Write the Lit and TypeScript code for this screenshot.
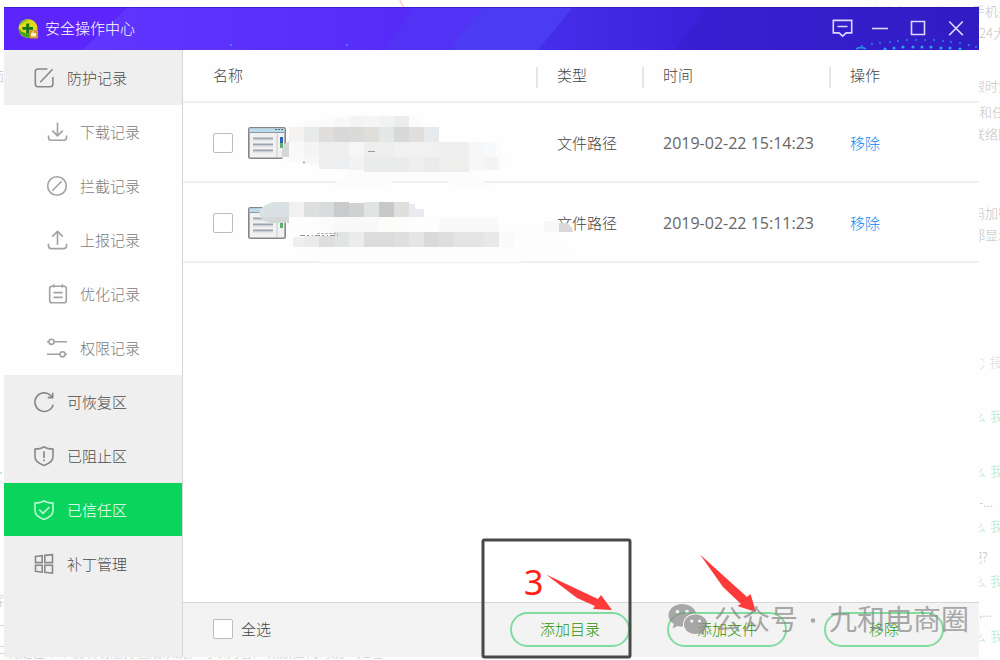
import { LitElement, html, svg, css, nothing } from "lit";
import { customElement, property, state } from "lit/decorators.js";
import { classMap } from "lit/directives/class-map.js";

interface NavItem {
  id: string;
  label: string;
  icon: string;
  sub?: boolean;
}

interface TrustedFile {
  id: string;
  type: string;
  time: string;
}

const NAV: NavItem[] = [
  { id: "protect", label: "防护记录", icon: "edit" },
  { id: "download", label: "下载记录", icon: "download", sub: true },
  { id: "block", label: "拦截记录", icon: "block", sub: true },
  { id: "report", label: "上报记录", icon: "upload", sub: true },
  { id: "optimize", label: "优化记录", icon: "note", sub: true },
  { id: "permission", label: "权限记录", icon: "sliders", sub: true },
  { id: "restore", label: "可恢复区", icon: "restore" },
  { id: "blocked", label: "已阻止区", icon: "shieldWarn" },
  { id: "trusted", label: "已信任区", icon: "shieldOk" },
  { id: "patch", label: "补丁管理", icon: "windows" },
];

const FILES: TrustedFile[] = [
  { id: "f1", type: "文件路径", time: "2019-02-22 15:14:23" },
  { id: "f2", type: "文件路径", time: "2019-02-22 15:11:23" },
];

const SHIELD = "M10 .8C12.6 2.6 15.6 3 19 3V10.5C19 15.3 15 17.8 10 19.4 5 17.8 1 15.3 1 10.5V3C4.4 3 7.4 2.6 10 .8Z";

const ICONS: Record<string, unknown> = {
  edit: svg`<path d="M13.5 1H4Q1.3 1 1.3 3.7V16Q1.3 18.7 4 18.7H16Q18.9 18.7 18.9 16V9M6.2 14.2 18.6 1.2"/>`,
  download: svg`<path d="M10.5 .5V13.5M5.3 8.6 10.5 13.8 15.8 8.6M1.5 13.5V15.5Q1.5 18.3 4.3 18.3H16.7Q19.5 18.3 19.5 15.5V13.5"/>`,
  block: svg`<circle cx="10" cy="10" r="9.3"/><path d="M5.3 14.7 14.7 5.3"/>`,
  upload: svg`<path d="M10.5 15V1.6M5.3 6.6 10.5 1.4 15.8 6.6M1.5 13.8V15.8Q1.5 18.6 4.3 18.6H16.7Q19.5 18.6 19.5 15.8V13.8"/>`,
  note: svg`<path d="M5 2.3H17Q19.3 2.3 19.3 4.6V16.4Q19.3 18.8 17 18.8H5Q2.7 18.8 2.7 16.4V4.6Q2.7 2.3 5 2.3ZM6.7 .2V3.6M15.3 .2V3.6M6.5 8.6H15.5M6.5 13.4H15.5"/>`,
  sliders: svg`<circle cx="4.5" cy="3.8" r="2.6"/><path d="M0 3.8H1.9M7.1 3.8H20M0 16.3H12.9M18.1 16.3H20"/><circle cx="15.5" cy="16.3" r="2.6"/>`,
  restore: svg`<path d="M19.2 12.6A9.3 9.3 0 1 1 16.8 3.6L18.6 5.4M18.7 .8V5.6H13.8"/>`,
  shieldWarn: svg`<path d=${SHIELD} /><path d="M10 5.3V12M10 13.4V15.2"/>`,
  shieldOk: svg`<path d=${SHIELD} /><path d="M5.2 9.6 9 13.4 15.4 7"/>`,
  windows: svg`<path d="M1.5 2.5 8.2 1.7V8.6H1.5ZM10.8 1.4 18.5 .6V8.6H10.8ZM1.5 11.3H8.2V18.2L1.5 17.4ZM10.8 11.3H18.5V19.2L10.8 18.4Z"/>`,
  feedback: svg`<path d="M1.3 1.4H19.7V13.9H14.2L10.6 17.2 7 13.9H1.3ZM5.5 7.5H15.5"/>`,
  minimize: svg`<path d="M2 9.500H18"/>`,
  maximize: svg`<path d="M3.500 2.500H16.500V15.500H3.500Z"/>`,
  close: svg`<path d="M3.200 2.500 16.800 16.100M16.800 2.500 3.200 16.100"/>`,
};

@customElement("line-icon")
class LineIcon extends LitElement {
  @property() name = "";

  static styles = css`
    :host { display: block; width: 20px; height: 20px; flex: none; }
    .icon { display: block; width: 20px; height: 20px; overflow: visible; fill: none; stroke: currentColor; stroke-width: 1.6; }
  `;

  render() {
    return html`<svg class="icon" viewBox="0 0 20 20" aria-hidden="true">${ICONS[this.name] ?? nothing}</svg>`;
  }
}

/* Blocks of the pixelated cover over the file names: x, y, width, height, colour. */
const BLOCKS: [number, number, number, number, string][] = [
  [334, 118, 15, 9, "#f8f8f8"], [349, 116, 15, 11, "#f3f4f4"], [364, 116, 15, 11, "#f5f5f4"], [379, 116, 15, 11, "#f1f3f3"], [394, 116, 15, 11, "#eceded"], [409, 118, 12, 9, "#fbfbfb"],
  [304, 121, 30, 6, "#fafafa"],
  [289, 127, 15, 15, "#f4f3f1"], [304, 127, 15, 15, "#e7eae8"], [319, 127, 15, 15, "#e0dedc"], [334, 127, 15, 15, "#d8d8d8"], [349, 127, 15, 15, "#dadad9"], [364, 127, 15, 15, "#e0dedb"], [379, 127, 15, 15, "#e5e8e9"], [394, 127, 15, 15, "#d8d8d8"], [409, 127, 15, 15, "#e1dfdb"], [424, 127, 15, 15, "#e6eaed"],
  [289, 142, 15, 15, "#f9f9f9"], [304, 142, 15, 15, "#f4f4f4"], [319, 142, 30, 15, "#eeeeee"], [349, 142, 15, 15, "#f5f6f7"], [364, 142, 30, 15, "#eeeeee"], [394, 142, 45, 15, "#f1f1f1"], [439, 142, 30, 15, "#efefef"], [469, 142, 15, 15, "#f5f6f7"], [484, 142, 12, 15, "#f7f9fb"],
  [289, 157, 15, 5, "#fafafa"], [304, 157, 15, 7, "#f7f7f7"], [319, 157, 15, 12, "#eeeeee"], [334, 157, 15, 12, "#eceff2"], [349, 157, 15, 13, "#f2f2f0"], [364, 157, 45, 15, "#eaebeb"], [409, 157, 15, 15, "#efefef"], [424, 157, 15, 15, "#ebebeb"], [439, 157, 30, 15, "#eeeeed"], [469, 157, 15, 13, "#f7f7f7"], [484, 157, 15, 13, "#f4f4f4"],
  [289, 202, 15, 15, "#f2f1ef"], [304, 202, 15, 15, "#dcdfde"], [319, 202, 15, 15, "#d9dcdc"], [334, 202, 15, 15, "#c9cacb"], [349, 203, 15, 14, "#d0d1d2"], [364, 202, 15, 15, "#e0e4e3"], [379, 202, 15, 15, "#c8c8c8"], [394, 202, 15, 15, "#e0dfde"], [409, 204, 6, 13, "#e8eaef"], [415, 209, 9, 8, "#e9ebf0"],
  [319, 217, 15, 15, "#fbfbfb"], [334, 217, 45, 15, "#f9f9f9"], [379, 217, 30, 15, "#fcfcfb"], [439, 218, 60, 14, "#f9f9f9"], [544, 221, 15, 11, "#f7f7f7"],
  [293, 237, 11, 10, "#efefef"], [304, 236, 15, 11, "#ebebec"], [319, 236, 15, 11, "#dedede"], [334, 232, 15, 15, "#e2e4e4"], [349, 232, 15, 15, "#ebedec"], [364, 232, 30, 15, "#dcdcdc"], [394, 232, 15, 15, "#dfdfdf"], [409, 232, 15, 15, "#e5e5e5"], [424, 232, 15, 15, "#dcdad9"], [439, 232, 15, 15, "#dedede"], [454, 232, 30, 15, "#e4e4e4"], [484, 232, 15, 15, "#e8e8e8"], [499, 232, 15, 15, "#fafafa"],
];

const UPPER_DOTS = [[862, 46], [872, 44], [880, 43], [890, 42], [898, 41], [907, 40], [916, 40], [925, 40], [934, 40], [943, 41], [951, 42], [960, 43], [969, 45], [976, 47]];
const LOWER_DOTS = [[885, 49], [894, 48], [903, 47], [913, 47], [922, 47], [931, 47], [941, 48], [950, 48], [960, 49]];

/* Clipped lines of the web page behind the window: x, baseline, text, class. */
const BACKDROP: [number, number, string, string][] = [
  [972, 16, "手机关", "gray"],
  [979, 38, "24大", "gray"],
  [972, 91, "限时免", "gray"],
  [979, 117, "和任务", "gray"],
  [972, 139, "联络网", "gray"],
  [972, 218, "码加密", "gray"],
  [972, 240, "都显示", "gray"],
  [990, 367, "接口", "pale"],
  [973, 421, "么", "green"], [990, 421, "我的", "green"],
  [973, 476, "么", "green"], [990, 476, "我的", "green"],
  [979, 507, "-...", "gray"],
  [973, 531, "么", "green"], [990, 531, "我的", "green"],
  [969, 562, "吧?", "gray"],
  [973, 586, "么", "green"], [990, 586, "我的", "green"],
  [979, 617, ",...", "gray"],
  [973, 641, "么", "green"], [990, 641, "我的", "green"],
];

@customElement("app-root")
class AppRoot extends LitElement {
  @state() private active = "trusted";
  @state() private selected: string[] = [];

  static styles = css`
    :host {
      display: flex;
      box-sizing: border-box;
      min-height: 100vh;
      padding: 7px 21px 3px 4px;
      position: relative;
      overflow: hidden;
      background: #fefefe;
      color: #444;
      font: 300 15px/20px "Noto Sans CJK SC", "Noto Sans", sans-serif;
    }
    .backdrop { position: absolute; right: 0; top: 0; width: 1000px; height: 660px; }
    .backdrop text { font-size: 13px; }
    .gray { fill: #c4c4c4; }
    .pale { fill: #dcdcdc; }
    .green { fill: #b4e6c5; }
    .window { position: relative; flex: 1; display: flex; flex-direction: column; background: #fefefe; min-width: 0; }
    .titlebar { position: relative; display: flex; align-items: center; height: 43px; padding: 0 13px 0 14px; background: #4a2bea; color: #fff; box-sizing: border-box; }
    .art { position: absolute; inset: 0; width: 100%; height: 100%; }
    .logo { position: relative; width: 20px; height: 20px; margin-right: 7px; }
    .title { position: relative; flex: 1; margin: 0; padding-bottom: 2px; font-size: 15px; font-weight: 300; }
    .controls { position: relative; display: flex; gap: 18px; }
    .control { border: 0; padding: 0; background: none; color: #dcd8fb; cursor: pointer; }
    .body { flex: 1; display: flex; min-height: 0; }
    .sidebar { width: 178px; flex: none; padding-top: 1px; background: #efefef; border-right: 1px solid #d6d6d6; }
    .nav { display: flex; align-items: center; gap: 13px; box-sizing: border-box; width: 100%; height: 54px; padding: 0 0 0 30px; border: 0; background: #efefef; color: #4c4c4c; font: inherit; text-align: left; cursor: pointer; }
    .nav line-icon { color: #888; }
    .sub { padding-left: 43px; background: #fefefe; color: #7c7c7c; }
    .sub line-icon { color: #a2a2a2; }
    .active { background: #0bd45d; color: #fff; border-bottom: 1px solid #efefef; }
    .active line-icon { color: #c0f5d5; }
    .main { flex: 1; display: flex; flex-direction: column; min-width: 0; }
    .list { flex: 1; position: relative; }
    .table { width: 100%; table-layout: fixed; border-collapse: separate; border-spacing: 0; }
    .table th { box-sizing: border-box; height: 53px; padding: 0 0 2px 21px; font-weight: 300; text-align: left; border-bottom: 2px solid #efefef; background: linear-gradient(#e6e6e6, #e6e6e6) left 0 top 17px / 2px 21px no-repeat; }
    .table td { box-sizing: border-box; height: 80px; padding: 2px 0 0 21px; border-bottom: 2px solid #efefef; }
    .table th.c-name, .table td.c-name { padding-left: 30px; background: none; }
    .table .c-type { width: 106px; }
    .table .c-time { width: 187px; }
    .table .c-action { width: 150px; }
    .time { color: #666; font: 400 16px/20px "Open Sans", "Noto Sans", sans-serif; }
    .file { display: flex; align-items: center; gap: 15px; }
    .file-icon { display: block; width: 38px; height: 33px; }
    .box { appearance: none; flex: none; box-sizing: border-box; width: 20px; height: 20px; margin: 0; border: 1px solid #bcbcbc; border-radius: 2px; background: #fff; }
    .box:checked { background: #0bd45d; }
    .link { color: #0a85f5; text-decoration: none; }
    .cover { position: absolute; left: 70px; top: 60px; width: 330px; height: 160px; pointer-events: none; }
    .footer { display: flex; align-items: center; gap: 37px; box-sizing: border-box; height: 55px; padding: 0 35px 2px 30px; border-top: 1px solid #d6d6d6; background: #f3f3f3; }
    .all { flex: 1; display: flex; align-items: center; gap: 8px; }
    .pill { width: 120px; height: 35px; padding: 0; border: 2px solid #82dc9d; border-radius: 18px; background: transparent; color: #1e9600; font: inherit; cursor: pointer; }
    .marks { position: absolute; right: 0; bottom: 0; width: 520px; height: 123px; pointer-events: none; }
    .step { font: 400 34px "Noto Sans", sans-serif; fill: #ff2012; }
    .stamp { font: 400 28px "Noto Sans CJK SC", sans-serif; fill: #8a8a8a; }
  `;

  private toggle(id: string) {
    this.selected = this.selected.includes(id) ? this.selected.filter((x) => x !== id) : [...this.selected, id];
  }

  private toggleAll(e: Event) {
    this.selected = (e.target as HTMLInputElement).checked ? FILES.map((f) => f.id) : [];
  }

  private renderBackdrop() {
    return html`<svg class="backdrop" viewBox="0 0 1000 660" aria-hidden="true">
      ${BACKDROP.map(([x, y, t, c]) => svg`<text x=${x} y=${y} class=${c}>${t}</text>`)}
      <text x="855" y="17" class="gray">从软件官网下载安</text>
      <text x="6" y="657" class="gray">确定让个个模块功能打包成系统，可以对客户做数据代码统一处理</text>
      <text x="-9" y="81" class="gray">面</text>
      <text x="-9" y="605" class="gray">客</text>
      <path d="M400 0Q401 4 404 8" stroke="#ffd5d5" stroke-width="2" fill="none" />
      <path d="M0 625.500H4M0 646.500H4M0 653.500H4" stroke="#d6d6d6" />
      <path d="M980 359Q984 358 984 362M980 369Q984 368 984 365" stroke="#e2e2e2" fill="none" />
      <path d="M0 473H2" stroke="#bdebd0" stroke-width="2" />
    </svg>`;
  }

  private renderTitlebar() {
    return html`<header class="titlebar">
      <svg class="art" viewBox="4 7 975 43" preserveAspectRatio="none" aria-hidden="true">
        <defs>
          <linearGradient id="a"><stop offset="0" stop-color="#6136ff" /><stop offset="1" stop-color="#572bf7" /></linearGradient>
          <linearGradient id="b"><stop offset="0" stop-color="#452eeb" /><stop offset="1" stop-color="#3b20d8" /></linearGradient>
          <linearGradient id="c"><stop offset="0" stop-color="#391fd3" /><stop offset="1" stop-color="#301cc3" /></linearGradient>
        </defs>
        <path fill="#5b25fb" d="M4 7H130L84 50H4Z" />
        <path fill="url(#a)" d="M128 7H417L384 50H82Z" />
        <path fill="#5233f6" d="M416 7H484L450 50H384Z" />
        <path fill="#4b3bf3" d="M483 7H575L538 50H449Z" />
        <path fill="url(#b)" d="M573 7H710L676 50H538Z" />
        <path fill="url(#c)" d="M707 7H979V50H675Z" />
        <path fill="#24129c" opacity=".5" d="M4 7H979V8H4Z" />
        <path d="M856 49Q861 46 866 49" stroke="#238fdc" stroke-width="2" fill="none" />
        ${UPPER_DOTS.map(([x, y]) => svg`<circle cx=${x} cy=${y} r="1.2" fill="#2c67dd" />`)}
        ${LOWER_DOTS.map(([x, y]) => svg`<circle cx=${x} cy=${y} r="1.6" fill="#27a2e8" />`)}
        <path fill="#4e79fa" d="M230 44h2v2h-2zM346 44h2v2h-2z" />
      </svg>
      <svg class="logo" viewBox="0 0 20 20" aria-hidden="true">
        <circle cx="10" cy="9.500" r="9.500" fill="#e3d919" />
        <path d="M.6 8C2 14 10 16 18.500 13.500A9.500 9.500 0 0 1 .6 8Z" fill="#43a31d" />
        <path d="M1 7C2 2 7-.5 12 .3 9 2 4 4 1 7Z" fill="#7ec12b" />
        <path d="M8.200 4.500H11.200V8H15V10.800H11.200V14.500H8.200V10.800H4.500V8H8.200Z" fill="#13761d" />
        <rect x="11.500" y="11" width="8.500" height="8.500" rx="1" fill="#d49a2a" />
        <path d="M13 17.500V14H14.500V12H15.500V14H18V17.500Z" fill="#fff0c4" />
      </svg>
      <h1 class="title">安全操作中心</h1>
      <div class="controls">
        ${[["feedback", "反馈"], ["minimize", "最小化"], ["maximize", "最大化"], ["close", "关闭"]].map(
          ([icon, label]) => html`<button class="control" aria-label=${label}><line-icon name=${icon}></line-icon></button>`,
        )}
      </div>
    </header>`;
  }

  private renderFileIcon() {
    return html`<svg class="file-icon" viewBox="0 0 38 33" aria-hidden="true">
      <rect x=".8" y=".8" width="36.400" height="30.400" rx="1.500" fill="#f1f1f1" stroke="#858585" stroke-width="1.600" />
      <path d="M1.600 1.600H36.400V5H1.600Z" fill="#b9dcec" />
      <path d="M27 2.500H29M30 2.500H32M33 2.500H35" stroke="#4c6a80" />
      <path d="M1.600 5.500H36.400" stroke="#8b9aa2" />
      <path d="M28 6H30V30H28Z" fill="#dcdcdc" />
      <path d="M5 11.500H25M5 17.500H25M5 23.500H25" stroke="#9ba4b0" stroke-width="2" />
      <path d="M5 13H25M5 19H25M5 25H25" stroke="#d4d6d8" />
      <path d="M32 10H35V16H32Z" fill="#2b62ad" />
      <path d="M32 16H35V21H32Z" fill="#58b165" />
    </svg>`;
  }

  private renderCover() {
    return html`<svg class="cover" viewBox="253 110 330 160" aria-hidden="true">
      <path fill="#fcfcfc" d="M289 130Q293 120 320 120L350 115H410Q420 118 421 127L439 142H497L505 160Q506 171 470 172L490 186H455L440 178H400L385 186H330L350 173 320 168 282 160Z" />
      <path fill="#fdfdfd" d="M289 217H499V226H545L572 250 520 262H320L294 248 289 240Z" />
      ${BLOCKS.map(([x, y, w, h, c]) => svg`<rect x=${x} y=${y} width=${w} height=${h} fill=${c} />`)}
      <path fill="#d5d9d6" d="M289 141V157H282Q280 145 289 141Z" />
      <path fill="#dae1e4" d="M289 202H274Q259 206 259 214 261 218 266 219H289Z" />
      <path fill="#d3d9d8" d="M260 217H289V223H272Q262 222 260 217Z" />
      <path fill="#d9d9d9" d="M559 223H567Q572 226 573 232H559Z" />
      <path stroke="#999" d="M368 151.500H375" />
      <path stroke="#8aa" stroke-width="1.500" d="M303 162.500H305" />
      <path stroke="#8d9298" fill="none" stroke-dasharray="5 2 2 3 1 2" d="M300 235.500H338" />
      <path stroke="#aeb4b8" fill="none" stroke-dasharray="3 1" d="M317 233.500H338" />
    </svg>`;
  }

  private renderMarks() {
    return html`<svg class="marks" viewBox="480 537 520 123" aria-hidden="true">
      <rect x="483" y="540" width="147" height="117" rx="1.500" fill="none" stroke="#484848" stroke-width="3" />
      <text class="step" x="524" y="595">3</text>
      <path fill="#fc3a3a" d="M546 574.500 598 599 601 595 612 610 593 609 595 606 577 598Z" />
      <path fill="#fc3a3a" d="M700 554.500 747 597 750.500 594 756 612 737.500 606 741 604 723 587Z" />
      <g opacity=".72">
        <path fill="#8a8a8a" fill-rule="evenodd" d="M682 604C674.600 604 668.500 609 668.500 615.300 668.500 619 670.500 622 673.800 624L672.500 628.500 677.500 626Q680 626.700 683 626.600C682 619 688 613.300 696 613 694.500 607.600 689 604 682 604ZM677.500 609.800A1.900 1.900 0 1 1 677.500 613.600 1.900 1.900 0 0 1 677.500 609.800ZM687 609.800A1.900 1.900 0 1 1 687 613.600 1.900 1.900 0 0 1 687 609.800Z" />
        <path fill="#8a8a8a" fill-rule="evenodd" d="M695.500 614.500C689 614.500 684 619 684 624.300 684 629.800 689 634 695.500 634Q698 634 700.500 633.200L704.500 635.300 703.500 631.600C706 629.800 707.300 627.300 707.300 624.300 707.300 619 702 614.500 695.500 614.500ZM691.700 619.500A1.600 1.600 0 1 1 691.700 622.700 1.600 1.600 0 0 1 691.700 619.500ZM699.500 619.500A1.600 1.600 0 1 1 699.500 622.700 1.600 1.600 0 0 1 699.500 619.500Z" />
        <text class="stamp" x="714" y="630">公众号</text>
        <circle cx="813" cy="620.500" r="2.200" fill="#8a8a8a" />
        <text class="stamp" x="829" y="630">九和电商圈</text>
      </g>
    </svg>`;
  }

  render() {
    return html`
      ${this.renderBackdrop()}
      <div class="window">
        ${this.renderTitlebar()}
        <div class="body">
          <nav class="sidebar">
            ${NAV.map(
              (n) => html`<button
                class=${classMap({ nav: true, sub: !!n.sub, active: n.id === this.active })}
                @click=${() => (this.active = n.id)}
              ><line-icon name=${n.icon}></line-icon><span>${n.label}</span></button>`,
            )}
          </nav>
          <main class="main">
            <div class="list">
              <table class="table">
                <thead>
                  <tr>
                    <th class="c-name">名称</th>
                    <th class="c-type">类型</th>
                    <th class="c-time">时间</th>
                    <th class="c-action">操作</th>
                  </tr>
                </thead>
                <tbody>
                  ${FILES.map(
                    (f) => html`<tr>
                      <td class="c-name">
                        <div class="file">
                          <input class="box" type="checkbox" aria-label="选择" .checked=${this.selected.includes(f.id)} @change=${() => this.toggle(f.id)} />
                          ${this.renderFileIcon()}
                        </div>
                      </td>
                      <td>${f.type}</td>
                      <td class="time">${f.time}</td>
                      <td><a class="link" href="#">移除</a></td>
                    </tr>`,
                  )}
                </tbody>
              </table>
              ${this.renderCover()}
            </div>
            <footer class="footer">
              <label class="all"><input class="box" type="checkbox" .checked=${this.selected.length === FILES.length} @change=${this.toggleAll} />全选</label>
              <button class="pill">添加目录</button>
              <button class="pill">添加文件</button>
              <button class="pill">移除</button>
            </footer>
          </main>
        </div>
      </div>
      ${this.renderMarks()}
    `;
  }
}
